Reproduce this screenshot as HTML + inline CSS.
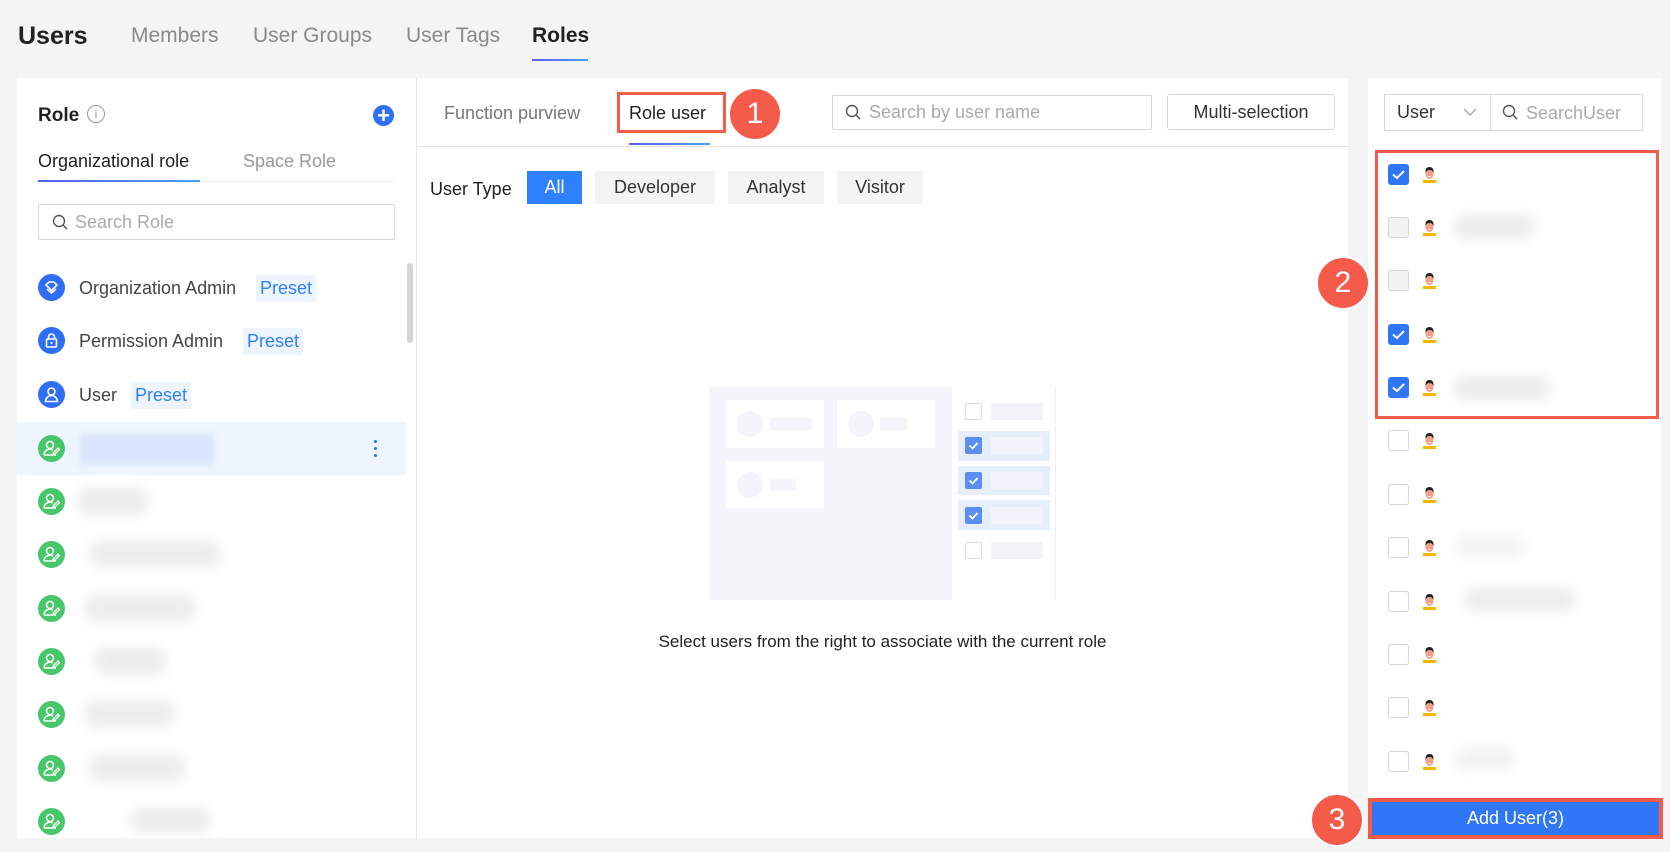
<!DOCTYPE html>
<html><head><meta charset="utf-8">
<style>
*{margin:0;padding:0;box-sizing:border-box}
body{width:1670px;height:852px;background:#f4f4f4;font-family:"Liberation Sans",sans-serif;position:relative;overflow:hidden;color:#333}
.a{position:absolute}
.t{position:absolute;white-space:nowrap;line-height:1}
.ic{position:absolute;left:38px;width:27px;height:27px;border-radius:50%}
.b{background:#2f6ef6}
.bl{position:absolute;background:#ececec;filter:blur(6px);border-radius:8px}
.cb{position:absolute;left:1388px;width:21px;height:21px;border:1px solid #d6d6d6;border-radius:3px;background:#fff}
.cb.c{background:#2f77f6;border-color:#2f77f6}
.cb.e{background:#f2f2f2}
.circ{position:absolute;width:50px;height:50px;border-radius:50%;background:#f45b4a;color:#fff;font-size:30px;text-align:center;line-height:50px;border:2px solid #fff}
.tag{position:absolute;background:#edf4fe;color:#2f80fd;font-size:18px;height:27px;line-height:27px;padding:0 4px}
.btn{position:absolute;background:#f4f4f4;font-size:18px;height:33px;line-height:33px;text-align:center;color:#333}
</style></head><body>
<div class="t" style="left:18px;top:24px;font-size:25px;font-weight:bold;color:#222">Users</div>
<div class="t" style="left:131px;top:25px;font-size:21px;color:#8a8a8a">Members</div>
<div class="t" style="left:253px;top:25px;font-size:21px;color:#8a8a8a">User Groups</div>
<div class="t" style="left:406px;top:25px;font-size:21px;color:#8a8a8a">User Tags</div>
<div class="t" style="left:532px;top:25px;font-size:21px;color:#222;font-weight:bold">Roles</div>
<div class="a" style="left:532px;top:59px;width:56px;height:2px;background:linear-gradient(90deg,#5a5ff0,#4aa0f5)"></div>

<div class="a" style="left:17px;top:78px;width:400px;height:760px;background:#fff;border-right:1px solid #e6e6e6"></div>
<div class="t" style="left:38px;top:106px;font-size:19px;font-weight:bold;color:#222">Role</div>
<div class="a" style="left:87px;top:105px;width:18px;height:18px;border:1px solid #999;border-radius:50%;color:#999;font-size:12px;text-align:center;line-height:16px">i</div>
<div class="a" style="left:373px;top:105px;width:21px;height:21px;border-radius:50%;background:#2f6ef6;color:#fff;font-size:22px;font-weight:bold;text-align:center;line-height:21px">+</div>
<div class="t" style="left:38px;top:152px;font-size:18px;color:#222">Organizational role</div>
<div class="t" style="left:243px;top:152px;font-size:18px;color:#999">Space Role</div>
<div class="a" style="left:38px;top:181px;width:357px;height:1px;background:#eee"></div>
<div class="a" style="left:38px;top:180px;width:162px;height:2px;background:linear-gradient(90deg,#5a5ff0,#4aa0f5)"></div>
<div class="a" style="left:38px;top:204px;width:357px;height:36px;border:1px solid #d9d9d9;border-radius:2px"></div>
<svg class="a" style="left:52px;top:214px" width="17" height="17" viewBox="0 0 17 17"><circle cx="7" cy="7" r="5.5" fill="none" stroke="#555" stroke-width="1.4"/><line x1="11" y1="11" x2="15" y2="15" stroke="#555" stroke-width="1.4"/></svg>
<div class="t" style="left:75px;top:213px;font-size:18px;color:#aaa">Search Role</div>
<div class="a" style="left:407px;top:263px;width:6px;height:80px;background:#d6d6d6;border-radius:3px"></div>

<div class="ic b" style="top:274px"><svg width="27" height="27" viewBox="0 0 27 27"><path d="M8 11 L11 8 H16 L19 11 L13.5 16.5Z" fill="none" stroke="#fff" stroke-width="1.6"/><path d="M9 15 L13.5 19 L18 15" fill="none" stroke="#fff" stroke-width="1.6"/></svg></div>
<div class="t" style="left:79px;top:279px;font-size:18px;color:#444">Organization Admin</div>
<div class="tag" style="left:256px;top:275px">Preset</div>
<div class="ic b" style="top:327px"><svg width="27" height="27" viewBox="0 0 27 27"><rect x="8.5" y="12" width="10" height="8" rx="1" fill="none" stroke="#fff" stroke-width="1.6"/><path d="M10.5 12 V10 a3 3 0 0 1 6 0 V12" fill="none" stroke="#fff" stroke-width="1.6"/><line x1="13.5" y1="15" x2="13.5" y2="17" stroke="#fff" stroke-width="1.6"/></svg></div>
<div class="t" style="left:79px;top:332px;font-size:18px;color:#444">Permission Admin</div>
<div class="tag" style="left:243px;top:328px">Preset</div>
<div class="ic b" style="top:381px"><svg width="27" height="27" viewBox="0 0 27 27"><circle cx="13.5" cy="10.5" r="3.5" fill="none" stroke="#fff" stroke-width="1.6"/><path d="M7.5 20.5 a6 6 0 0 1 12 0 Z" fill="none" stroke="#fff" stroke-width="1.6"/></svg></div>
<div class="t" style="left:79px;top:386px;font-size:18px;color:#444">User</div>
<div class="tag" style="left:131px;top:382px">Preset</div>

<div class="a" style="left:17px;top:422px;width:389px;height:53px;background:#eef5fe"></div>
<div class="a" style="left:80px;top:434px;width:134px;height:31px;background:#d9e5fc;filter:blur(3px)"></div>
<div class="a" style="left:374px;top:440px;width:3px;height:3px;border-radius:50%;background:#2f6ef6;box-shadow:0 7px 0 #2f6ef6,0 14px 0 #2f6ef6"></div>

<svg width="0" height="0" style="position:absolute"><defs><g id="gi"><circle cx="13.5" cy="13.5" r="13.5" fill="#47c76a"/><circle cx="12" cy="10" r="3.5" fill="none" stroke="#fff" stroke-width="1.5"/><path d="M6 20 a6 6 0 0 1 9 -5" fill="none" stroke="#fff" stroke-width="1.5"/><path d="M6 20 H18" stroke="#fff" stroke-width="1.5"/><path d="M15 18 L20 13 L21.5 14.5 L16.5 19.5 Z" fill="none" stroke="#fff" stroke-width="1.3"/></g></defs></svg>
<svg class="a" style="left:38px;top:435px" width="27" height="27"><use href="#gi"/></svg>
<svg class="a" style="left:38px;top:488px" width="27" height="27"><use href="#gi"/></svg>
<svg class="a" style="left:38px;top:541px" width="27" height="27"><use href="#gi"/></svg>
<svg class="a" style="left:38px;top:595px" width="27" height="27"><use href="#gi"/></svg>
<svg class="a" style="left:38px;top:648px" width="27" height="27"><use href="#gi"/></svg>
<svg class="a" style="left:38px;top:701px" width="27" height="27"><use href="#gi"/></svg>
<svg class="a" style="left:38px;top:755px" width="27" height="27"><use href="#gi"/></svg>
<svg class="a" style="left:38px;top:808px" width="27" height="27"><use href="#gi"/></svg>
<div class="bl" style="left:78px;top:488px;width:70px;height:26px"></div>
<div class="bl" style="left:90px;top:541px;width:130px;height:26px"></div>
<div class="bl" style="left:85px;top:595px;width:110px;height:26px"></div>
<div class="bl" style="left:95px;top:648px;width:70px;height:26px"></div>
<div class="bl" style="left:85px;top:701px;width:90px;height:26px"></div>
<div class="bl" style="left:90px;top:755px;width:95px;height:26px"></div>
<div class="bl" style="left:130px;top:808px;width:80px;height:24px"></div>

<div class="a" style="left:417px;top:78px;width:931px;height:760px;background:#fff"></div>
<div class="a" style="left:417px;top:146px;width:931px;height:1px;background:#e3e3e3"></div>
<div class="t" style="left:444px;top:104px;font-size:18px;color:#777">Function purview</div>
<div class="t" style="left:629px;top:104px;font-size:18px;color:#222">Role user</div>
<div class="a" style="left:617px;top:92px;width:109px;height:41px;border:3px solid #f45b4a"></div>
<div class="a" style="left:629px;top:143px;width:81px;height:2px;background:linear-gradient(90deg,#5a5ff0,#4aa0f5)"></div>
<div class="circ" style="left:728px;top:87px;width:54px;height:54px;line-height:50px">1</div>
<div class="a" style="left:832px;top:95px;width:320px;height:35px;border:1px solid #d9d9d9;border-radius:2px"></div>
<svg class="a" style="left:845px;top:104px" width="17" height="17" viewBox="0 0 17 17"><circle cx="7" cy="7" r="5.5" fill="none" stroke="#555" stroke-width="1.4"/><line x1="11" y1="11" x2="15" y2="15" stroke="#555" stroke-width="1.4"/></svg>
<div class="t" style="left:869px;top:103px;font-size:18px;color:#aaa">Search by user name</div>
<div class="a" style="left:1167px;top:94px;width:168px;height:36px;border:1px solid #d9d9d9;border-radius:3px;font-size:18px;text-align:center;line-height:34px;color:#333">Multi-selection</div>
<div class="t" style="left:430px;top:180px;font-size:18px;color:#222">User Type</div>
<div class="btn" style="left:527px;top:171px;width:55px;background:#2f80fd;color:#fff">All</div>
<div class="btn" style="left:595px;top:171px;width:120px">Developer</div>
<div class="btn" style="left:728px;top:171px;width:96px">Analyst</div>
<div class="btn" style="left:837px;top:171px;width:86px">Visitor</div>

<div class="a" style="left:709px;top:387px;width:243px;height:213px;background:#f3f5fa"></div>
<div class="a" style="left:726px;top:400px;width:98px;height:48px;background:#fff"></div>
<div class="a" style="left:837px;top:400px;width:98px;height:48px;background:#fff"></div>
<div class="a" style="left:726px;top:461px;width:98px;height:47px;background:#fff"></div>
<div class="a" style="left:737px;top:411px;width:26px;height:26px;border-radius:50%;background:#f3f5fa"></div>
<div class="a" style="left:770px;top:418px;width:43px;height:12px;background:#f3f5fa"></div>
<div class="a" style="left:848px;top:411px;width:26px;height:26px;border-radius:50%;background:#f3f5fa"></div>
<div class="a" style="left:880px;top:418px;width:27px;height:12px;background:#f3f5fa"></div>
<div class="a" style="left:737px;top:472px;width:26px;height:26px;border-radius:50%;background:#f3f5fa"></div>
<div class="a" style="left:770px;top:479px;width:26px;height:12px;background:#f3f5fa"></div>
<div class="a" style="left:1055px;top:387px;width:1px;height:213px;background:#f0f0f0"></div>
<div class="a" style="left:958px;top:431px;width:92px;height:30px;background:#e6eefc"></div>
<div class="a" style="left:958px;top:466px;width:92px;height:29px;background:#e6eefc"></div>
<div class="a" style="left:958px;top:500px;width:92px;height:30px;background:#e6eefc"></div>
<div class="a" style="left:965px;top:403px;width:17px;height:17px;border:1px solid #ddd;border-radius:2px;background:#fff"></div>
<div class="a" style="left:965px;top:542px;width:17px;height:17px;border:1px solid #ddd;border-radius:2px;background:#fff"></div>
<svg class="a" style="left:965px;top:437px" width="17" height="17"><rect width="17" height="17" rx="2" fill="#5b8ef0"/><path d="M4.5 8.5 L7.5 11.5 L12.5 6" fill="none" stroke="#fff" stroke-width="1.8"/></svg>
<svg class="a" style="left:965px;top:472px" width="17" height="17"><rect width="17" height="17" rx="2" fill="#5b8ef0"/><path d="M4.5 8.5 L7.5 11.5 L12.5 6" fill="none" stroke="#fff" stroke-width="1.8"/></svg>
<svg class="a" style="left:965px;top:507px" width="17" height="17"><rect width="17" height="17" rx="2" fill="#5b8ef0"/><path d="M4.5 8.5 L7.5 11.5 L12.5 6" fill="none" stroke="#fff" stroke-width="1.8"/></svg>
<div class="a" style="left:991px;top:403px;width:52px;height:17px;background:#f1f3f7"></div>
<div class="a" style="left:991px;top:437px;width:52px;height:17px;background:#f1f4fb"></div>
<div class="a" style="left:991px;top:472px;width:52px;height:17px;background:#f1f4fb"></div>
<div class="a" style="left:991px;top:507px;width:52px;height:17px;background:#f1f4fb"></div>
<div class="a" style="left:991px;top:542px;width:52px;height:17px;background:#f1f3f7"></div>
<div class="t" style="left:417px;width:931px;text-align:center;top:633px;font-size:17px;color:#222">Select users from the right to associate with the current role</div>

<div class="a" style="left:1368px;top:78px;width:293px;height:760px;background:#fff"></div>
<div class="a" style="left:1384px;top:94px;width:107px;height:37px;border:1px solid #d9d9d9"></div>
<div class="t" style="left:1397px;top:103px;font-size:18px;color:#333">User</div>
<svg class="a" style="left:1463px;top:107px" width="14" height="10"><path d="M1 2 L7 8 L13 2" fill="none" stroke="#999" stroke-width="1.2"/></svg>
<div class="a" style="left:1490px;top:94px;width:153px;height:37px;border:1px solid #d9d9d9"></div>
<svg class="a" style="left:1502px;top:104px" width="17" height="17" viewBox="0 0 17 17"><circle cx="7" cy="7" r="5.5" fill="none" stroke="#555" stroke-width="1.4"/><line x1="11" y1="11" x2="15" y2="15" stroke="#555" stroke-width="1.4"/></svg>
<div class="t" style="left:1526px;top:104px;font-size:18px;color:#aaa">SearchUser</div>

<div class="cb c" style="top:164px"></div><div class="cb e" style="top:217px"></div><div class="cb e" style="top:270px"></div><div class="cb c" style="top:324px"></div><div class="cb c" style="top:377px"></div>
<div class="cb" style="top:430px"></div><div class="cb" style="top:484px"></div><div class="cb" style="top:537px"></div><div class="cb" style="top:591px"></div><div class="cb" style="top:644px"></div><div class="cb" style="top:697px"></div><div class="cb" style="top:751px"></div>
<svg width="0" height="0" style="position:absolute"><defs>
<g id="ck"><path d="M5 10.5 L9 14 L16 7" fill="none" stroke="#fff" stroke-width="2"/></g>
<g id="av"><path d="M3 19 Q9.5 13 16 19Z" fill="#f5b800"/><rect x="3" y="16" width="13" height="3" fill="#f5b800"/><ellipse cx="9.5" cy="10" rx="4" ry="5" fill="#f0a08a"/><path d="M5.5 9 Q5 3 9.5 3 Q14 3 13.5 9 Q12 5.5 9.5 6 Q7 5.5 5.5 9Z" fill="#222"/><path d="M7.5 12 Q9.5 14 11.5 12" fill="#fff"/></g>
</defs></svg>
<svg class="a" style="left:1388px;top:164px" width="21" height="21"><use href="#ck"/></svg>
<svg class="a" style="left:1388px;top:324px" width="21" height="21"><use href="#ck"/></svg>
<svg class="a" style="left:1388px;top:377px" width="21" height="21"><use href="#ck"/></svg>
<svg class="a" style="left:1420px;top:164px" width="19" height="19"><use href="#av"/></svg>
<svg class="a" style="left:1420px;top:217px" width="19" height="19"><use href="#av"/></svg>
<svg class="a" style="left:1420px;top:270px" width="19" height="19"><use href="#av"/></svg>
<svg class="a" style="left:1420px;top:324px" width="19" height="19"><use href="#av"/></svg>
<svg class="a" style="left:1420px;top:377px" width="19" height="19"><use href="#av"/></svg>
<svg class="a" style="left:1420px;top:430px" width="19" height="19"><use href="#av"/></svg>
<svg class="a" style="left:1420px;top:484px" width="19" height="19"><use href="#av"/></svg>
<svg class="a" style="left:1420px;top:537px" width="19" height="19"><use href="#av"/></svg>
<svg class="a" style="left:1420px;top:591px" width="19" height="19"><use href="#av"/></svg>
<svg class="a" style="left:1420px;top:644px" width="19" height="19"><use href="#av"/></svg>
<svg class="a" style="left:1420px;top:697px" width="19" height="19"><use href="#av"/></svg>
<svg class="a" style="left:1420px;top:751px" width="19" height="19"><use href="#av"/></svg>
<div class="bl" style="left:1455px;top:215px;width:80px;height:24px"></div>
<div class="bl" style="left:1455px;top:376px;width:95px;height:24px"></div>
<div class="bl" style="left:1465px;top:588px;width:110px;height:22px"></div>
<div class="bl" style="left:1455px;top:535px;width:70px;height:22px;opacity:.6"></div>
<div class="bl" style="left:1455px;top:748px;width:60px;height:22px;opacity:.7"></div>
<div class="a" style="left:1375px;top:150px;width:284px;height:269px;border:3px solid #f45b4a"></div>
<div class="circ" style="left:1316px;top:256px;width:54px;height:54px;line-height:50px">2</div>
<div class="a" style="left:1368px;top:798px;width:295px;height:41px;background:#2f77f6;border:4px solid #f45b4a;color:#fff;font-size:18px;text-align:center;line-height:33px">Add User(3)</div>
<div class="circ" style="left:1310px;top:793px;width:54px;height:54px;line-height:50px">3</div>
</body></html>
